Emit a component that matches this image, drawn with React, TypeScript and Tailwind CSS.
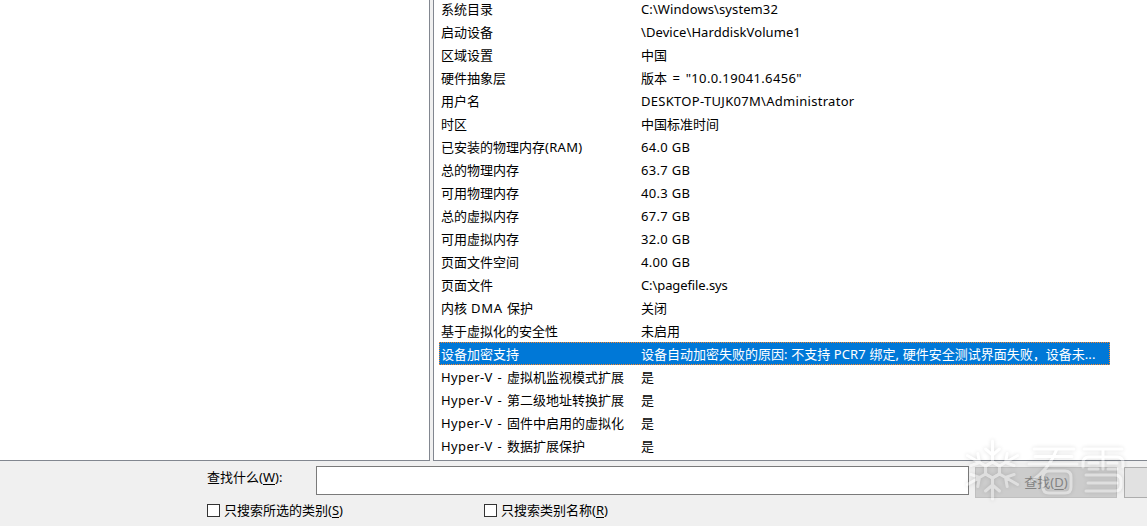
import { clsx } from 'clsx';

const HYPER_V = 'tracking-[0.4px] [word-spacing:1px]';

const ROWS = [
  { name: '系统目录', value: 'C:\\Windows\\system32', latinClass: 'tracking-[0.1px]' },
  { name: '启动设备', value: '\\Device\\HarddiskVolume1', latinClass: 'tracking-[0.08px]' },
  { name: '区域设置', value: '中国' },
  { name: '硬件抽象层', value: '版本 = "10.0.19041.6456"', latinClass: 'tracking-[0.35px] [word-spacing:1.7px]' },
  { name: '用户名', value: 'DESKTOP-TUJK07M\\Administrator', latinClass: 'tracking-[0.3px]' },
  { name: '时区', value: '中国标准时间' },
  { name: '已安装的物理内存(RAM)', value: '64.0 GB', latinClass: 'tracking-[0.3px]' },
  { name: '总的物理内存', value: '63.7 GB', latinClass: 'tracking-[0.3px]' },
  { name: '可用物理内存', value: '40.3 GB', latinClass: 'tracking-[0.3px]' },
  { name: '总的虚拟内存', value: '67.7 GB', latinClass: 'tracking-[0.3px]' },
  { name: '可用虚拟内存', value: '32.0 GB', latinClass: 'tracking-[0.3px]' },
  { name: '页面文件空间', value: '4.00 GB', latinClass: 'tracking-[0.3px]' },
  { name: '页面文件', value: 'C:\\pagefile.sys', latinClass: 'tracking-[-0.1px]' },
  { name: '内核 DMA 保护', value: '关闭', latinClass: 'tracking-[0.7px]' },
  { name: '基于虚拟化的安全性', value: '未启用' },
  {
    name: '设备加密支持',
    value: '设备自动加密失败的原因: 不支持 PCR7 绑定, 硬件安全测试界面失败，设备未...',
    latinClass: 'tracking-[0.15px]',
    selected: true,
  },
  { name: 'Hyper-V - 虚拟机监视模式扩展', value: '是', latinClass: HYPER_V },
  { name: 'Hyper-V - 第二级地址转换扩展', value: '是', latinClass: HYPER_V },
  { name: 'Hyper-V - 固件中启用的虚拟化', value: '是', latinClass: HYPER_V },
  { name: 'Hyper-V - 数据扩展保护', value: '是', latinClass: HYPER_V },
];

// Latin runs get their own letter spacing, the Chinese glyphs keep the full-width grid
function MixedText({ text, latinClass }: { text: string; latinClass?: string }) {
  return text.split(/([\x20-\x7e]+)/).map((part, i) => (
    <span key={i} className={i % 2 ? latinClass : undefined}>
      {part}
    </span>
  ));
}

function Checkbox({ label, hotkey }: { label: string; hotkey: string }) {
  return (
    <label className="flex items-center gap-1 whitespace-nowrap">
      <span className="size-[13px] border border-[#333] bg-white" />
      <span className="pt-px">
        {label}(<u className="underline-offset-2">{hotkey}</u>)
      </span>
    </label>
  );
}

function Watermark() {
  return (
    <svg
      className="pointer-events-none absolute top-[436px] left-[960px] drop-shadow-[0_0_2px_rgba(0,0,0,0.35)]"
      width="170"
      height="70"
      viewBox="0 0 170 70"
      fill="none"
      stroke="#fff"
      strokeWidth="3"
      strokeLinecap="round"
      opacity="0.38"
    >
      {[0, 60, 120, 180, 240, 300].map((angle) => (
        <path key={angle} transform={`rotate(${angle} 32.5 34)`} d="M32.5 26V5M32.5 19l-7-6M32.5 19l7-6M32.5 26l-7 4M32.5 26l7 4" />
      ))}
      {/* 看 */}
      <path d="M74 13h40M75 20.5h37M69 28h48M97 13c-5 13-13 24-27 33M89 35h16q6 0 6 6v10q0 6-6 6H89q-6 0-6-6V41q0-6 6-6" />
      {/* 雪 */}
      <path d="M124 13h38M123 31v-4q0-6 6-6h28q6 0 6 6v4M143 13v20M129 27h9M129 33h9M148 27h9M148 33h9M126 39h29q6 0 6 6v4q0 6-6 6h-29M128 47h29" />
    </svg>
  );
}

export default function App() {
  return (
    <div className="relative flex h-[526px] w-[1147px] flex-col overflow-hidden bg-[#f0f0f0] font-['Noto_Sans','Noto_Sans_CJK_SC',sans-serif] text-[13px] text-black">
      <div className="flex h-[461px] gap-[3px]">
        <div className="w-[430px] shrink-0 border-r border-b border-[#828790] bg-white" />
        <div className="flex-1 overflow-hidden border-b border-l border-[#828790] bg-white pl-[5px]">
          <div className="-mt-[3px] w-[671px]">
            {ROWS.map((row) => (
              <div
                key={row.name}
                className={clsx(
                  'flex h-[23px] border border-dotted pt-px pl-px leading-[21px] whitespace-pre',
                  row.selected ? 'border-[#ff8728] bg-[#0078d7] text-white' : 'border-transparent'
                )}
              >
                <div className="w-[200px] shrink-0">
                  <MixedText text={row.name} latinClass={row.latinClass} />
                </div>
                <div>
                  <MixedText text={row.value} latinClass={row.latinClass} />
                </div>
              </div>
            ))}
          </div>
        </div>
      </div>

      <div className="flex h-9 pt-[5px] pl-[207px]">
        <div className="w-[109px] pt-px leading-[21px]">
          查找什么(<u className="underline-offset-2">W</u>):
        </div>
        <div className="h-[29px] w-[653px] border border-[#7a7a7a] bg-white" />
        <div className="mt-px ml-1.5 flex h-[31px] w-[142px] items-center justify-center border border-[#bfbfbf] bg-[#ccc] text-[#838383]">
          <span className="pt-px">
            查找(<u className="underline-offset-2">D</u>)
          </span>
        </div>
        <div className="mt-px ml-[7px] h-[31px] flex-1 border border-r-0 border-[#adadad] bg-[#e1e1e1]" />
      </div>

      <div className="flex h-[27px] items-center pl-[207px]">
        <div className="w-[277px]">
          <Checkbox label="只搜索所选的类别" hotkey="S" />
        </div>
        <Checkbox label="只搜索类别名称" hotkey="R" />
      </div>
      <Watermark />
    </div>
  );
}
